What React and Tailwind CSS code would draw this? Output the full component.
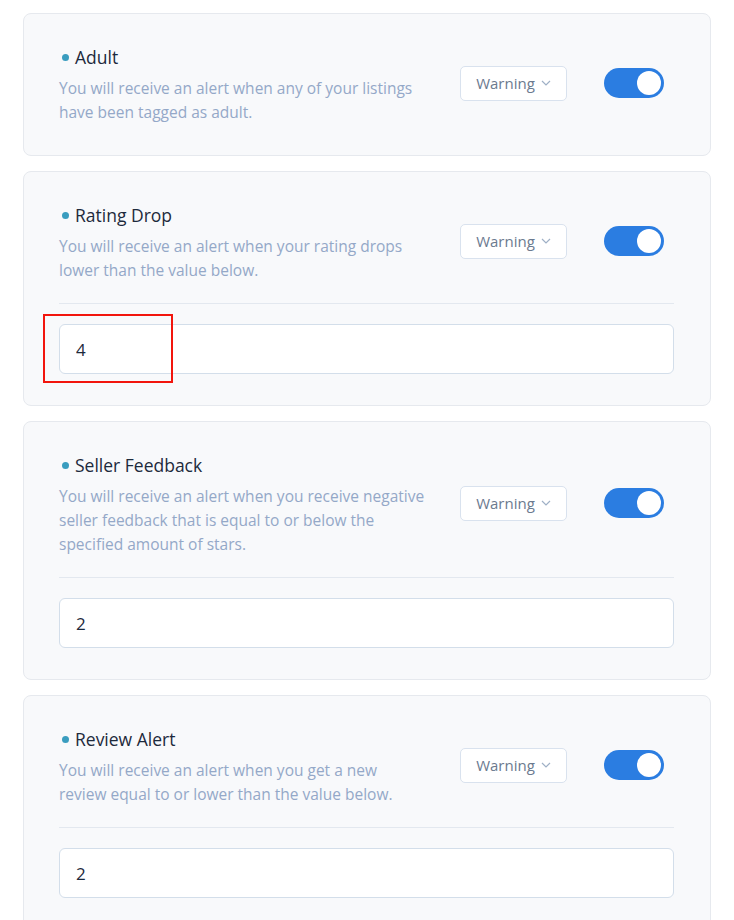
import { useState } from "react";

const alerts = [
  {
    title: "Adult",
    lines: ["You will receive an alert when any of your listings", "have been tagged as adult."],
  },
  {
    title: "Rating Drop",
    lines: ["You will receive an alert when your rating drops", "lower than the value below."],
    value: "4",
    marked: true,
  },
  {
    title: "Seller Feedback",
    lines: [
      "You will receive an alert when you receive negative",
      "seller feedback that is equal to or below the",
      "specified amount of stars.",
    ],
    value: "2",
  },
  {
    title: "Review Alert",
    lines: ["You will receive an alert when you get a new", "review equal to or lower than the value below."],
    value: "2",
  },
];

const Toggle = ({ on, onClick }) => (
  <button
    onClick={onClick}
    className={`w-[60px] h-[30px] rounded-full flex items-center px-[3px] ${
      on ? "bg-[#2b7de1] justify-end" : "bg-[#d5dde8] justify-start"
    }`}
  >
    <span className="w-[24px] h-[24px] rounded-full bg-white block" />
  </button>
);

const AlertCard = ({ alert }) => {
  const [on, setOn] = useState(true);

  return (
    <div className="bg-[#f8f9fb] border border-[#e6e9ee] rounded-[8px] pl-[35px] pr-[36px] pt-[32px] pb-[31px]">
      {/* Header */}
      <div className="flex items-center">
        <div className="w-[380px]">
          <div className="flex items-center gap-[6px] text-[17.5px] leading-[22px] text-[#1d2a3c]">
            <span className="w-[7px] h-[7px] rounded-full bg-[#3a9dbf] ml-[3px]" />
            {alert.title}
          </div>
          <p className="mt-[8px] text-[15.5px] leading-[24px] text-[#94a8c8]">
            {alert.lines.map((l, i) => (
              <span key={i} className="block whitespace-nowrap">
                {l}
              </span>
            ))}
          </p>
        </div>

        <div className="ml-auto -mt-[4px] flex items-center gap-[37px] mr-[10px]">
          <button className="h-[35px] w-[107px] bg-white border border-[#d9e2ee] rounded-[5px] flex items-center justify-center gap-[6px] text-[15px] text-[#6b7a8f]">
            Warning
            <svg width="10" height="6" viewBox="0 0 10 6" fill="none">
              <path d="M1 1l4 4 4-4" stroke="#9fb0c6" strokeWidth="1.2" />
            </svg>
          </button>
          <Toggle on={on} onClick={() => setOn(!on)} />
        </div>
      </div>

      {alert.value && (
        <>
          <div className="border-t border-[#e3e8ef] mt-[21px] mb-[20px]" />
          <div className="relative">
            <input
              defaultValue={alert.value}
              className="w-full h-[50px] bg-white border border-[#d3deea] rounded-[6px] px-[16px] text-[17px] text-[#1d2a3c] outline-none"
            />
            {alert.marked && (
              <div className="absolute left-[-16px] top-[-10px] w-[130px] h-[69px] border-2 border-[#f2150d] pointer-events-none" />
            )}
          </div>
        </>
      )}
    </div>
  );
};

const App = () => {
  return (
    <div className="min-h-screen bg-white px-[23px] pt-[13px] font-['Open_Sans',sans-serif]">
      <div className="flex flex-col gap-[15px] w-[688px]">
        {alerts.map((a) => (
          <AlertCard key={a.title} alert={a} />
        ))}
      </div>
    </div>
  );
};

export default App;
